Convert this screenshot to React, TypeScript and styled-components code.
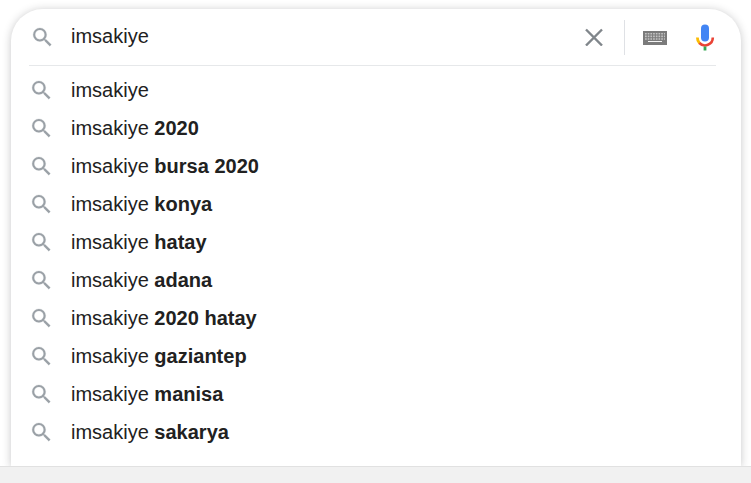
import React, { useState } from "react";
import styled, { createGlobalStyle } from "styled-components";

const GlobalStyle = createGlobalStyle`
  *, *::before, *::after { box-sizing: border-box; }
  body {
    margin: 0;
    background: #fff;
    color: #212121;
    font-family: "Liberation Sans", Arial, sans-serif;
    font-size: 20px;
  }
`;

const Page = styled.div`
  display: flex;
  flex-direction: column;
  min-height: 100vh;
  overflow: hidden;
`;

const SearchPanel = styled.form`
  margin: 9px 10px 0 11px;
  padding-bottom: 15px;
  background: #fff;
  border-radius: 32px 32px 0 0;
  box-shadow: 0 1px 8px rgba(32, 33, 36, 0.25);
`;

const SearchBar = styled.div`
  display: flex;
  align-items: center;
  height: 56px;
  padding: 0 24px 0 19px;
`;

const SearchInput = styled.input`
  flex: 1;
  min-width: 0;
  height: 36px;
  margin-left: 16px;
  padding: 0 0 2px;
  border: 0;
  outline: 0;
  background: transparent;
  color: inherit;
  font: inherit;
`;

const IconButton = styled.button`
  display: flex;
  align-items: center;
  justify-content: center;
  flex: none;
  width: 24px;
  height: 32px;
  padding: 0;
  border: 0;
  background: transparent;
  cursor: pointer;
`;

const Tools = styled.div`
  display: flex;
  align-items: center;
  gap: 26px;
  margin-left: 18px;
  padding-left: 18px;
  border-left: 1px solid #dfe1e5;
  height: 35px;
`;

const Divider = styled.hr`
  height: 1px;
  margin: 0 25px 5px 18px;
  border: 0;
  background: #e6e8ea;
`;

const Suggestions = styled.ul`
  margin: 0;
  padding: 0;
  list-style: none;
`;

const Suggestion = styled.button`
  display: flex;
  align-items: center;
  gap: 17px;
  width: 100%;
  height: 38px;
  padding: 0 18px;
  border: 0;
  background: transparent;
  color: inherit;
  font: inherit;
  text-align: left;
  cursor: pointer;
`;

const Glass = styled.svg`
  flex: none;
  width: 25px;
  height: 25px;
  fill: #9aa0a6;
  stroke: #9aa0a6;
  stroke-width: 0.2;
`;

const Footer = styled.footer`
  position: relative;
  flex: 1;
  min-height: 17px;
  border-top: 1px solid #e1e1e1;
  background: #f1f1f1;
`;

const SearchIcon = () => (
  <Glass viewBox="0 0.2 24 24" aria-hidden="true">
    <path d="M15.5 14h-.79l-.28-.27A6.471 6.471 0 0 0 16 9.5 6.5 6.5 0 1 0 9.5 16c1.61 0 3.09-.59 4.23-1.57l.27.28v.79l5 4.99L20.49 19l-4.99-5zm-6 0C7.01 14 5 11.99 5 9.5S7.01 5 9.5 5 14 7.01 14 9.5 11.99 14 9.5 14z" />
  </Glass>
);

const ClearIcon = () => (
  <svg width="18" height="18" viewBox="0 0 18 18" aria-hidden="true">
    <path d="M1 1.5L17 17.5M17 1.5L1 17.5" stroke="#80868b" strokeWidth="2.4" />
  </svg>
);

const KeyboardIcon = () => (
  <svg width="24" height="16" viewBox="0 -2 24 16" aria-hidden="true">
    <path fill="#7b7b7b" d="M0 0h24v14H0z" />
    <path
      stroke="#c4c4c4"
      strokeWidth="1.6"
      strokeDasharray="1.7 1"
      d="M2 2.8h20M2 5.4h20M2 8h20"
    />
    <path stroke="#f4f4f4" strokeWidth="1" d="M5 10.5h14" />
  </svg>
);

const MicIcon = () => (
  <svg width="20" height="28" viewBox="0 -1 20 28" aria-hidden="true">
    <rect x="6" y="0.5" width="8" height="17" rx="4" fill="#4285f4" />
    <path d="M2.4 13.5A7.7 7.7 0 0 0 4.6 19.2" fill="none" stroke="#fbbc05" strokeWidth="2.8" />
    <path d="M4.4 19A7.8 7.8 0 0 0 17.8 13.5" fill="none" stroke="#ea4335" strokeWidth="2.6" />
    <path d="M8.6 22.5h2.8v4H8.6z" fill="#34a853" />
  </svg>
);

const completions = [
  "",
  "2020",
  "bursa 2020",
  "konya",
  "hatay",
  "adana",
  "2020 hatay",
  "gaziantep",
  "manisa",
  "sakarya",
];

export default function App() {
  const [query, setQuery] = useState("imsakiye");

  return (
    <>
      <GlobalStyle />
      <Page>
        <SearchPanel role="search" onSubmit={(e) => e.preventDefault()}>
          <SearchBar>
            <SearchIcon />
            <SearchInput
              type="text"
              aria-label="Ara"
              autoComplete="off"
              spellCheck={false}
              value={query}
              onChange={(e) => setQuery(e.target.value)}
            />
            <IconButton type="button" aria-label="Temizle" onClick={() => setQuery("")}>
              <ClearIcon />
            </IconButton>
            <Tools>
              <IconButton type="button" aria-label="Klavye">
                <KeyboardIcon />
              </IconButton>
              <IconButton type="button" aria-label="Sesle arama">
                <MicIcon />
              </IconButton>
            </Tools>
          </SearchBar>
          <Divider />
          <Suggestions>
            {completions.map((rest) => (
              <li key={rest}>
                <Suggestion
                  type="button"
                  onClick={() => setQuery(`imsakiye ${rest}`.trim())}
                >
                  <SearchIcon />
                  <span>
                    imsakiye{rest && <> <b>{rest}</b></>}
                  </span>
                </Suggestion>
              </li>
            ))}
          </Suggestions>
        </SearchPanel>
        <Footer />
      </Page>
    </>
  );
}
